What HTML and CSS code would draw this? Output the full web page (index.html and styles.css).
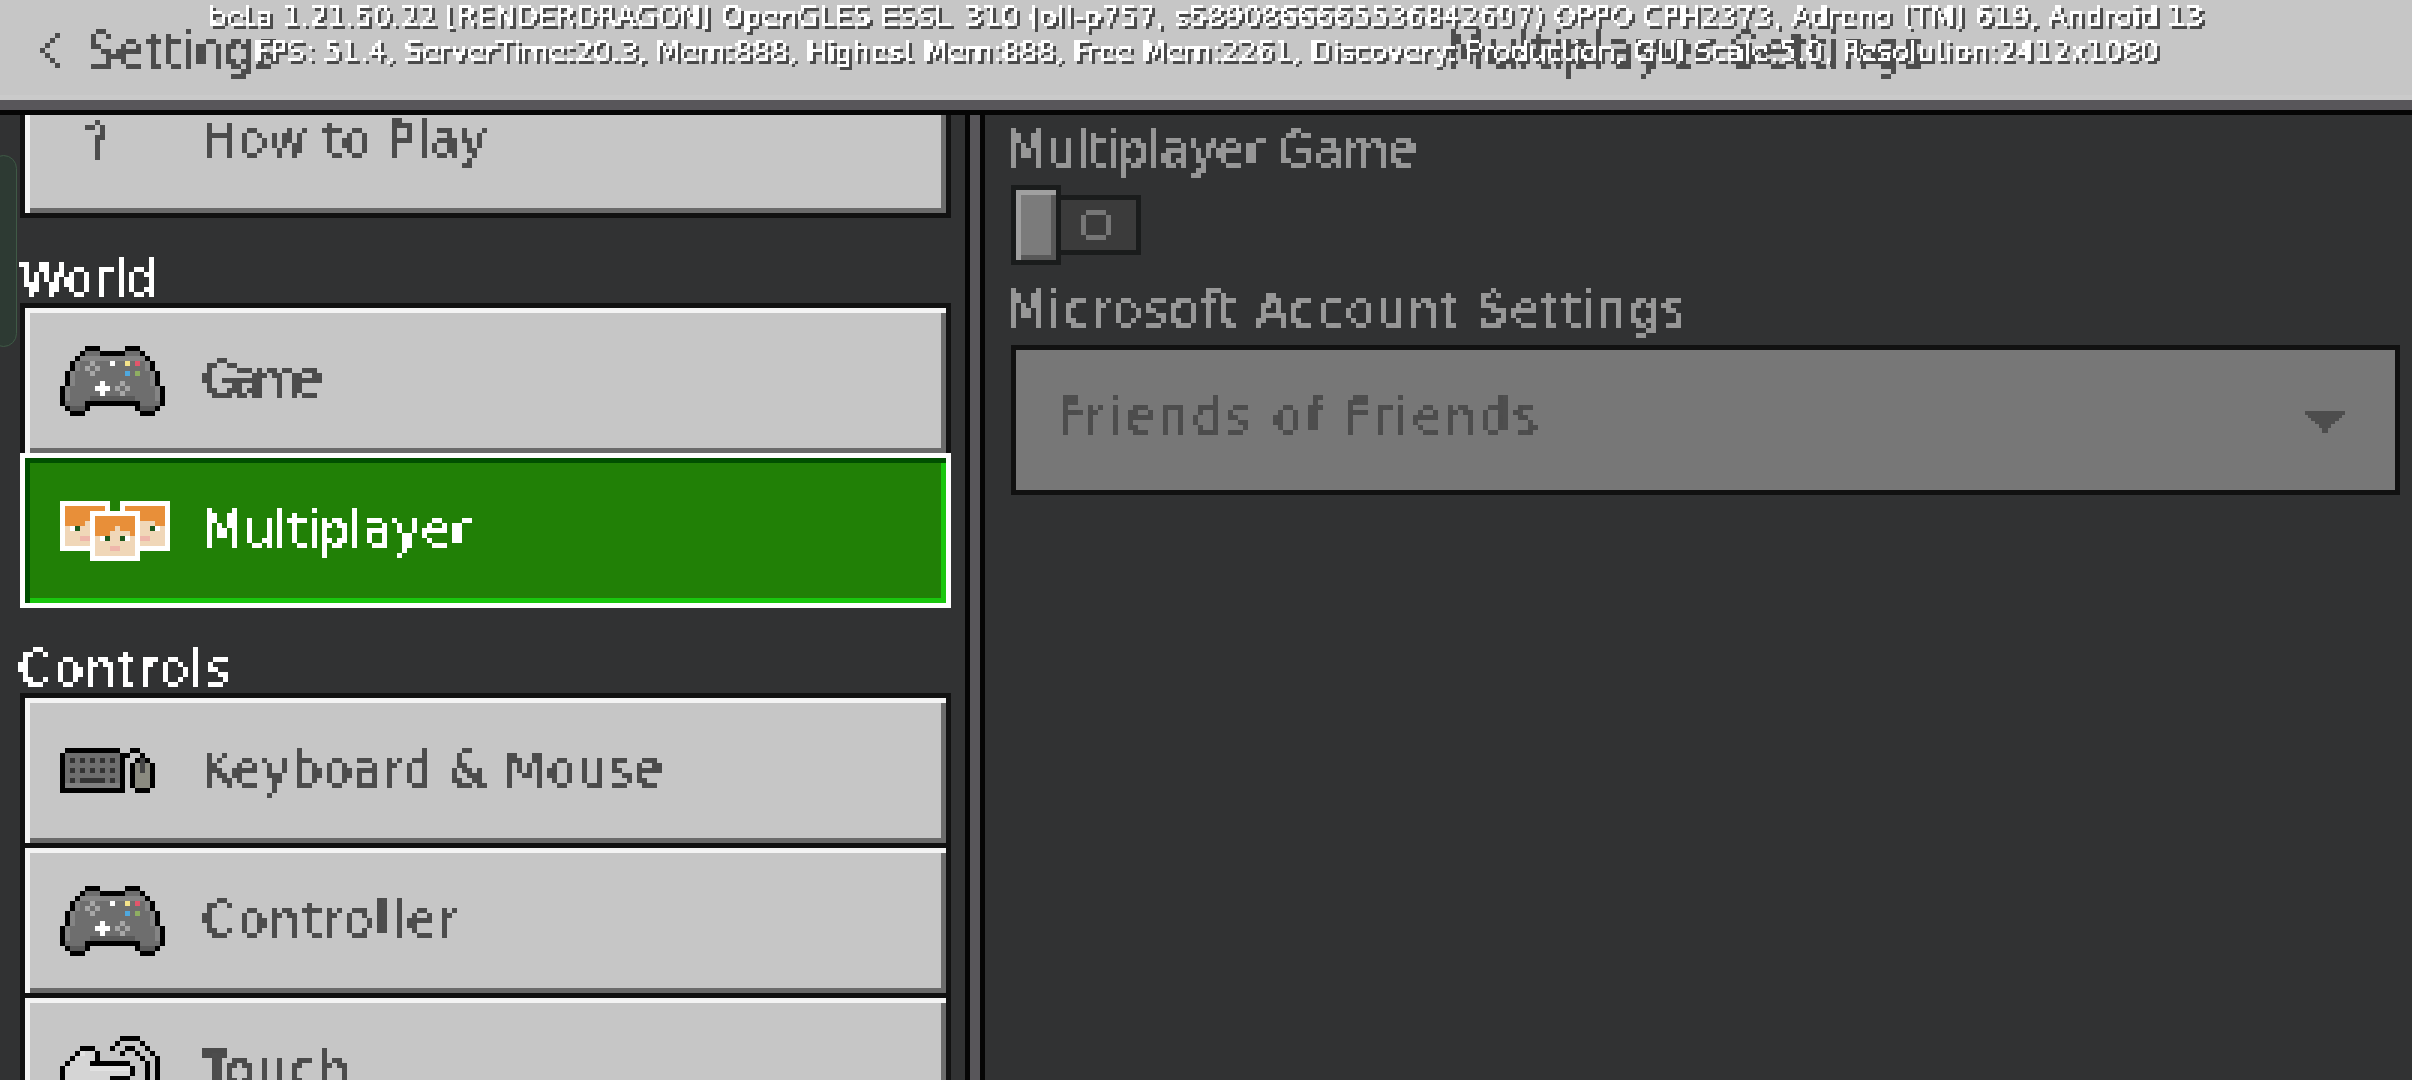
FILE: index.html
```html
<!DOCTYPE html>
<html lang="en">
<head>
<meta charset="utf-8">
<title>Multiplayer Settings</title>
<link rel="stylesheet" href="styles.css">
</head>
<body>
<svg class="defs" width="0" height="0" aria-hidden="true">
  <defs>
    <filter id="blocky5" x="-2%" y="-5%" width="104%" height="110%" color-interpolation-filters="sRGB">
      <feGaussianBlur in="SourceGraphic" stdDeviation="0.8" result="soft"/>
      <feFlood x="2" y="2" width="1" height="1"/>
      <feComposite width="5" height="5"/>
      <feTile result="grid"/>
      <feComposite in="soft" in2="grid" operator="in"/>
      <feComponentTransfer>
        <feFuncA type="discrete" tableValues="0 1 1"/>
      </feComponentTransfer>
      <feMorphology operator="dilate" radius="2"/>
    </filter>
    <filter id="blocky3" x="-1%" y="-10%" width="102%" height="120%" color-interpolation-filters="sRGB">
      <feGaussianBlur in="SourceGraphic" stdDeviation="0.5" result="soft"/>
      <feFlood x="1" y="1" width="1" height="1"/>
      <feComposite width="3" height="3"/>
      <feTile result="grid"/>
      <feComposite in="soft" in2="grid" operator="in"/>
      <feComponentTransfer>
        <feFuncA type="discrete" tableValues="0 1 1 1 1"/>
      </feComponentTransfer>
      <feMorphology operator="dilate" radius="1"/>
    </filter>
    <symbol id="pad" viewBox="0 0 21 14">
      <path fill="#6e6e6e" d="M5 1h3v1h5V1h3v1h1v1h1v2h1v3h1v4h-1v1h-4v-2H6v2H2v-1H1V8h0V5h1V3h1V2h2z"/>
      <path fill="#858585" d="M4 2h13v1H4zM3 3h1v2H3zM2 5h1v3H2zM1 8h1v3H1zM17 3h1v2h-1zM18 5h1v3h-1zM19 8h1v3h-1z"/>
      <path fill="#595959" d="M6 10h9v1H6zM2 12h3v1H2zM16 12h3v1h-3z"/>
      <path fill="#000" d="M5 0h3v1H5zM13 0h3v1h-3zM4 1h1v1H4zM8 1h5v1H8zM16 1h1v1h-1zM3 2h1v1H3zM17 2h1v1h-1zM2 3h1v2H2zM18 3h1v2h-1zM1 5h1v3H1zM19 5h1v3h-1zM0 8h1v4H0zM20 8h1v4h-1zM6 11h9v1H6zM1 12h1v1H1zM5 11h1v2H5zM15 11h1v2h-1zM19 12h1v1h-1zM2 13h3v1H2zM16 13h3v1h-3z"/>
      <path fill="#a6a6a6" d="M6 3h1v1H6zM5 4h1v1H5zM7 4h1v1H7zM6 5h1v1H6zM12 7h1v1h-1zM11 8h1v1h-1zM13 8h1v1h-1zM12 9h1v1h-1z"/>
      <path fill="#fff" d="M10 3h1v1h-1zM8 7h1v1H8zM7 8h3v1H7zM8 9h1v1H8z"/>
      <path fill="#f5e38a" d="M13 3h1v1h-1z"/>
      <path fill="#e2566b" d="M15 3h1v1h-1z"/>
      <path fill="#4fa8de" d="M13 5h1v1h-1z"/>
      <path fill="#8fae62" d="M15 5h1v1h-1z"/>
    </symbol>
  </defs>
</svg>

<div class="screen">
  <header class="topbar">
    <div class="top-left">
      <svg class="chevron" viewBox="0 0 4 7" shape-rendering="crispEdges" aria-hidden="true"><path fill="#4c4c4c" d="M3 0h1v1H3zM2 1h1v1H2zM1 2h1v1H1zM0 3h1v1H0zM1 4h1v1H1zM2 5h1v1H2zM3 6h1v1H3z"/></svg>
      <span class="top-text">Settings</span>
    </div>
    <span class="top-text title">Multiplayer Settings</span>
  </header>

  <div class="columns">
    <nav class="sidebar">
      <div class="group group-help">
        <a class="btn btn-end"><span class="icon"><span class="question pix">?</span></span><span class="pix ls-how">How to Play</span></a>
      </div>
      <h2 class="group-title group-title-w pix ls-world">World</h2>
      <div class="group">
        <a class="btn">
          <span class="icon"><svg class="pad" shape-rendering="crispEdges" aria-hidden="true"><use href="#pad"/></svg></span>
          <span class="pix ls-game">Game</span>
        </a>
        <a class="btn btn-on">
          <span class="icon">
            <svg class="faces" viewBox="0 0 22 12" shape-rendering="crispEdges" aria-hidden="true">
              <path fill="#fff" d="M0 0h10v10H0zM12 0h10v10H12z"/>
              <path fill="#f0d7b8" d="M1 1h8v8H1zM13 1h8v8h-8z"/>
              <path fill="#e88f39" d="M1 1h8v3H1zM1 4h4v1H1zM13 1h8v3h-8zM19 4h2v1h-2z"/>
              <path fill="#fff" d="M2 5h1v1H2zM19 5h1v1h-1z"/>
              <path fill="#1f5a1c" d="M3 5h1v1H3zM18 5h1v1h-1z"/>
              <path fill="#efb6ab" d="M4 7h2v1H4zM16 7h2v1h-2z"/>
              <path fill="#fff" d="M6 2h10v10H6z"/>
              <path fill="#f0d7b8" d="M7 3h8v8H7z"/>
              <path fill="#e88f39" d="M7 3h8v2H7zM7 5h4v1H7zM12 5h3v1h-3zM7 6h3v1H7zM14 6h1v1h-1z"/>
              <path fill="#fff" d="M8 7h1v1H8zM13 7h1v1h-1z"/>
              <path fill="#1f5a1c" d="M9 7h1v1H9zM12 7h1v1h-1z"/>
              <path fill="#efb6ab" d="M10 9h2v1h-2z"/>
            </svg>
          </span>
          <span class="pix ls-multi">Multiplayer</span>
        </a>
      </div>
      <h2 class="group-title group-title-c pix ls-controls">Controls</h2>
      <div class="group">
        <a class="btn">
          <span class="icon">
            <svg class="keys" viewBox="0 0 19 9" shape-rendering="crispEdges" aria-hidden="true">
              <path fill="#6e6e6e" d="M1 1h11v7H1z"/>
              <path fill="#7f7f7f" d="M1 7h11v1H1z"/>
              <path fill="#333" d="M2 2h1v1H2zM4 2h1v1H4zM6 2h1v1H6zM8 2h1v1H8zM10 2h1v1h-1zM2 4h1v1H2zM4 4h1v1H4zM6 4h1v1H6zM8 4h1v1H8zM10 4h1v1h-1zM2 6h1v1H2zM4 6h5v1H4zM10 6h1v1h-1z"/>
              <path fill="#8b8b80" d="M15 3h3v5h-3z"/>
              <path fill="#444" d="M16 2h1v3h-1z"/>
              <path fill="#000" d="M1 0h11v1H1zM0 1h1v7H0zM12 1h2v1h-2zM12 2h1v6h-1zM0 8h13v1H0zM14 0h2v1h-2zM16 1h1v1h-1zM15 2h1v1h-1zM17 2h1v1h-1zM14 3h1v5h-1zM18 3h1v5h-1zM15 8h3v1h-3z"/>
            </svg>
          </span>
          <span class="pix ls-keys">Keyboard &amp; Mouse</span>
        </a>
        <a class="btn">
          <span class="icon"><svg class="pad" shape-rendering="crispEdges" aria-hidden="true"><use href="#pad"/></svg></span>
          <span class="pix ls-ctrl">Controller</span>
        </a>
        <a class="btn">
          <span class="icon">
            <svg class="hand" viewBox="0 0 20 14" shape-rendering="crispEdges" aria-hidden="true">
              <path fill="#d5d5d5" d="M4 3h3v1H4zM3 4h4v1H3zM2 5h4v1H2zM1 6h13v2H1zM1 8h9v1H1z"/>
              <path fill="#e2e2e2" d="M6 6h8v1H6zM3 3h2v1H3z"/>
              <path fill="#000" d="M12 0h4v1h-4zM11 1h1v1h-1zM16 1h1v1h-1zM4 2h3v1H4zM10 2h1v1h-1zM13 2h2v1h-2zM17 2h1v1h-1zM3 3h1v1H3zM7 3h1v2H7zM12 3h1v1h-1zM15 3h1v1h-1zM18 3h1v1h-1zM2 4h1v1H2zM16 4h1v1h-1zM19 4h1v10h-1zM1 5h1v1H1zM6 5h8v1H6zM17 5h1v9h-1zM0 6h1v8H0zM14 6h1v2h-1zM10 8h4v1h-4z"/>
            </svg>
          </span>
          <span class="pix ls-touch">Touch</span>
        </a>
      </div>
    </nav>

    <div class="divider"></div>

    <main class="panel">
      <h3 class="field-label pix ls-mgame">Multiplayer Game</h3>
      <div class="toggle" aria-hidden="true">
        <span class="knob"></span>
        <span class="track">
          <svg class="ring" viewBox="0 0 6 6" shape-rendering="crispEdges"><path fill="#767676" d="M1 0h4v1H1zM0 1h1v4H0zM5 1h1v4H5zM1 5h4v1H1z"/></svg>
        </span>
      </div>
      <h3 class="field-label field-label-second pix ls-ms">Microsoft Account Settings</h3>
      <div class="dropdown">
        <span class="pix ls-friends">Friends of Friends</span>
        <svg class="caret" viewBox="0 0 20 11" shape-rendering="crispEdges" aria-hidden="true"><path fill="#4d4d4d" d="M0 0h20v2h-1.500v1.500h-1.500v1.500h-2v1.500h-2v2h-1.500v2.500h-3v-2.500H7v-2H5v-1.500H3V3.500H1.500V2H0z"/></svg>
      </div>
    </main>
  </div>

  <div class="edge-tab" aria-hidden="true"></div>

  <div class="debug" aria-label="Debug information">
    <p class="debug-line debug-one">beta 1.21.50.22 [RENDERDRAGON] OpenGLES ESSL_310 (oll-p757, s5890866665536842697) OPPO CPH2373, Adreno (TM) 619, Android 13</p>
    <p class="debug-line debug-two">FPS: 51.4, ServerTime:20.3, Mem:888, Highest Mem:888, Free Mem:2261, Discovery: Production, GUI Scale:5.0, Resolution:2412x1080</p>
  </div>
</div>
</body>
</html>
```
FILE: styles.css
```css
* { box-sizing: border-box; }
html, body { margin: 0; height: 100%; }
body {
  overflow: hidden;
  background: #313233;
  font-family: "DejaVu Sans", sans-serif;
}
.defs { position: absolute; }
.screen {
  position: relative;
  width: 2412px;
  height: 1080px;
  overflow: hidden;
  display: flex;
  flex-direction: column;
}
.pix, .top-text {
  filter: url(#blocky5);
  font-size: 48px;
  line-height: 52px;
  font-weight: 400;
  white-space: nowrap;
}

/* tracking per label, to reach the reference's text widths */
.ls-how { letter-spacing: 0.2px; }
.ls-world { letter-spacing: 0; }
.ls-game { letter-spacing: -7.3px; }
.ls-multi { letter-spacing: 0; }
.ls-controls { letter-spacing: 2.1px; }
.ls-keys { letter-spacing: 0.8px; }
.ls-ctrl { letter-spacing: 2.2px; }
.ls-touch { letter-spacing: 2.4px; }
.ls-mgame { letter-spacing: -1px; }
.ls-ms { letter-spacing: 1.6px; }
.ls-friends { letter-spacing: 3.4px; }

/* top bar */
.topbar {
  position: relative;
  flex: 0 0 115px;
  display: flex;
  align-items: flex-start;
  background: #c6c6c6;
  border-bottom: 5px solid #050505;
  box-shadow: inset 0 -10px 0 #58565a, inset 0 -15px 0 #cacaca;
}
.top-left {
  display: flex;
  align-items: center;
  gap: 26px;
  padding: 24px 0 0 40px;
}
.chevron { width: 20px; height: 35px; }
.top-text {
  color: #4c4c4c;
  letter-spacing: -0.5px;
}
.title {
  position: absolute;
  left: 1446px;
  top: 24px;
  letter-spacing: 0;
}

/* columns */
.columns {
  flex: 1;
  min-height: 0;
  display: flex;
}
.sidebar {
  flex: 0 0 965px;
  padding: 0 14px 0 20px;
  overflow: hidden;
  background: #313233;
}
.divider {
  flex: 0 0 20px;
  border: solid #050505;
  border-width: 0 5px;
  background: #58565a;
}
.group { display: flex; flex-direction: column; }
.group-help .btn { margin-top: -52px; }
.group-title {
  margin: 34px 0 0;
  color: #fff;
  height: 51px;
}
.group-title-w { margin-left: -1px; }
.group-title-c { margin-left: -2px; }

.btn {
  flex: 0 0 150px;
  height: 150px;
  display: flex;
  align-items: center;
  border: 5px solid #111;
  border-bottom: 0;
  background: #c6c6c6;
  box-shadow: inset 5px 5px 0 #f4f4f4, inset 0 -5px 0 #6b6b6b, inset -5px 0 0 #6b6b6b;
  color: #4c4c4c;
  padding: 0 0 4px 35px;
}
.btn-end { height: 155px; flex-basis: 155px; border-bottom: 5px solid #111; }
.btn-on {
  flex: 0 0 155px;
  height: 155px;
  border: 5px solid #fff;
  background: #218006;
  box-shadow: inset 5px 5px 0 #005000, inset 0 -5px 0 #1ac70e, inset -5px 0 0 #1ac70e;
  color: #fff;
}
.icon {
  flex: 0 0 142px;
  display: flex;
  align-items: center;
  margin-top: 4px;
}
.question { padding-left: 24px; }
.pad { display: block; width: 105px; height: 70px; }
.faces { display: block; width: 110px; height: 60px; }
.keys { display: block; width: 95px; height: 45px; }
.hand { display: block; width: 100px; height: 70px; }

/* right panel */
.panel {
  flex: 1;
  min-width: 0;
  padding: 8px 12px 0 26px;
  display: flex;
  flex-direction: column;
  align-items: flex-start;
}
.field-label {
  margin: 0 0 0 -5px;
  color: #979797;
}
.field-label-second { margin-top: 18px; }
.toggle {
  display: flex;
  align-items: center;
  margin: 10px 0 0;
  height: 80px;
}
.knob {
  width: 50px;
  height: 80px;
  border: 5px solid #1a1c1c;
  background: #7b7b7b;
  box-shadow: inset 5px 5px 0 #a0a0a0, inset -5px -5px 0 #585858;
}
.track {
  width: 80px;
  height: 60px;
  display: flex;
  align-items: center;
  justify-content: center;
  padding-right: 5px;
  border: 5px solid #1a1c1c;
  border-left: 0;
  background: #3b3b3b;
}
.ring { width: 30px; height: 30px; display: block; }
.dropdown {
  width: 1389px;
  height: 150px;
  margin-top: 10px;
  padding: 0 50px 9px 42px;
  display: flex;
  align-items: center;
  justify-content: space-between;
  border: 5px solid #111;
  background: #777;
  color: #4d4d4d;
}
.caret { width: 40px; height: 22px; flex: none; margin-top: 13px; }

/* overlays */
.edge-tab {
  position: absolute;
  left: -10px;
  top: 155px;
  width: 27px;
  height: 192px;
  border: 1px solid #3f5a46;
  border-radius: 14px;
  background: #2d3a33;
}
.debug {
  position: absolute;
  left: 0;
  top: -1px;
  width: 100%;
  text-align: center;
}
.debug-line {
  margin: 0;
  color: #fff;
  font-size: 28px;
  line-height: 35px;
  white-space: nowrap;
  filter: url(#blocky3) drop-shadow(3px 3px 0 #4a4a4a);
}
.debug-one { letter-spacing: 0.3px; }
.debug-two { letter-spacing: 0.1px; }
```
